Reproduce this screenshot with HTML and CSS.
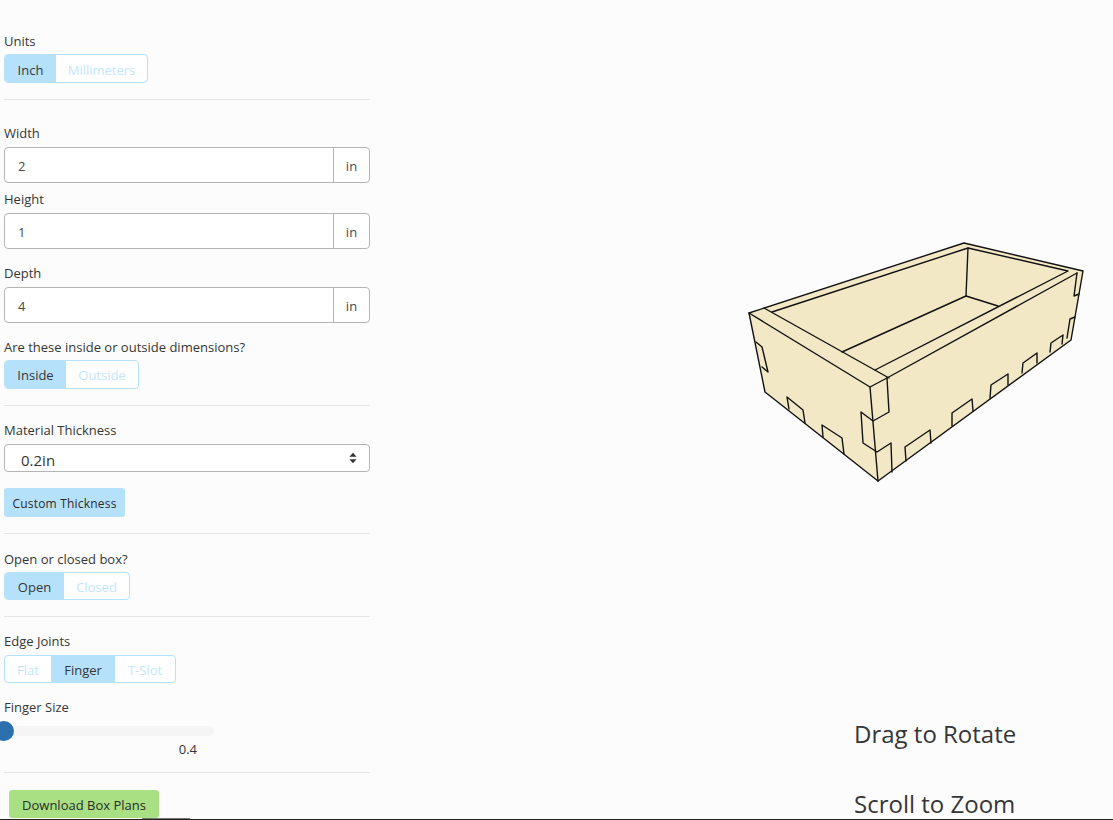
FILE: index.html
```html
<!DOCTYPE html>
<html lang="en">
<head>
<meta charset="utf-8">
<title>Box Plans</title>
<link rel="stylesheet" href="styles.css">
</head>
<body>
<div class="app">
  <aside class="panel">
    <section class="group group-units">
      <div class="label">Units</div>
      <div class="toggle">
        <span class="opt on w-inch">Inch</span><span class="opt w-mm">Millimeters</span>
      </div>
    </section>
    <hr class="rule rule-units">
    <div class="label label-first">Width</div>
    <div class="field"><span class="value">2</span><span class="unit">in</span></div>
    <div class="label label-tight">Height</div>
    <div class="field"><span class="value">1</span><span class="unit">in</span></div>
    <div class="label label-mid">Depth</div>
    <div class="field"><span class="value">4</span><span class="unit">in</span></div>
    <div class="label label-dim">Are these inside or outside dimensions?</div>
    <div class="toggle toggle-dim">
      <span class="opt on w-in">Inside</span><span class="opt w-out">Outside</span>
    </div>
    <hr class="rule rule-dim">
    <div class="label">Material Thickness</div>
    <div class="select"><span class="select-value">0.2in</span>
      <svg class="carets" width="8" height="12" viewBox="0 0 8 12"><path d="M4 .8 7.6 4.8H.4zM4 11.2.4 7.2h7.2z"/></svg>
    </div>
    <button class="custom">Custom Thickness</button>
    <hr class="rule rule-custom">
    <div class="label">Open or closed box?</div>
    <div class="toggle toggle-sm">
      <span class="opt on w-open">Open</span><span class="opt w-closed">Closed</span>
    </div>
    <hr class="rule rule-open">
    <div class="label label-edge">Edge Joints</div>
    <div class="toggle toggle-sm">
      <span class="opt w-flat">Flat</span><span class="opt on w-finger">Finger</span><span class="opt w-tslot">T-Slot</span>
    </div>
    <div class="label label-finger">Finger Size</div>
    <div class="slider"><span class="thumb"></span></div>
    <div class="slider-value">0.4</div>
    <hr class="rule rule-slider">
    <button class="download">Download Box Plans</button>
  </aside>
  <main class="stage">
    <svg class="box" width="345" height="245" viewBox="745 240 345 245">
      <path class="wood" d="M749 313 964 243 1083 271 1071 340 878 481 765 392Z"/>
      <g class="edges">
        <path d="M749 313 964 243 1083 271 1071 340 878 481 765 392 749 313"/>
        <path d="M764 308 889 378"/>
        <path d="M749 313 870 387 887 378"/>
        <path d="M772 312 968 248 1068 271 875 370"/>
        <path d="M1077 273 887 378"/>
        <path d="M968 248 966 296 842 352"/>
        <path d="M966 296 998 306"/>
        <path d="M1079 294 1074 296 1077 273"/>
        <path d="M870 387 878 481"/>
        <path d="M887 378 889 412 873 421 861 412 863 443 877 452 891 443 892 472"/>
        <path d="M787 397 789 409M787 397 803 410 805 423"/>
        <path d="M822 425 823 437M822 425 842 438 844 454"/>
        <path d="M756 342 762 347 768 372 762 367"/>
        <path d="M906 461 905 447 930 430 931 443"/>
        <path d="M952 426 952 413 972 399 973 411"/>
        <path d="M990 398 991 385 1008 374 1008 385"/>
        <path d="M1022 373 1023 363 1037 353 1037 363"/>
        <path d="M1050 352 1051 343 1063 335 1062 344"/>
        <path d="M1067 338 1070 319 1075 317"/>
      </g>
    </svg>
    <div class="hint hint-drag">Drag to Rotate</div>
    <div class="hint hint-scroll">Scroll to Zoom</div>
  </main>
  <span class="edge-mark"></span>
</div>
</body>
</html>
```
FILE: styles.css
```css
* { box-sizing: border-box; }
html, body { margin: 0; height: 100%; overflow: hidden; }
body {
  background: #fcfcfc;
  color: #363636;
  font-family: "Open Sans", "Noto Sans", sans-serif;
  font-size: 13px;
}
.app {
  position: relative;
  width: 1113px;
  height: 820px;
  overflow: hidden;
  border-bottom: 1px solid #222;
}
.edge-mark {
  position: absolute;
  left: 142px;
  bottom: 0;
  width: 48px;
  height: 1px;
  background: #777;
}
.panel {
  width: 366px;
  margin-left: 4px;
  padding-top: 32px;
  display: flex;
  flex-direction: column;
  align-items: flex-start;
}
.label { height: 22px; line-height: 18px; white-space: nowrap; color: #363636; }
.label-first { height: 16px; line-height: 16px; margin-bottom: 6px; }
.label-tight { margin-top: 6px; height: 24px; line-height: 20px; }
.label-mid { margin-top: 15px; height: 23px; }
.label-dim { margin-top: 15px; }
.label-edge { height: 23px; }
.label-finger { margin-top: 15px; height: 26px; }
.toggle {
  display: flex;
  height: 29px;
  border: 1px solid #b6e1fb;
  border-radius: 4px;
  overflow: hidden;
  background: #fff;
}
.toggle-sm { height: 28px; }
.opt {
  display: flex;
  align-items: center;
  justify-content: center;
  color: #bfe6fd;
  padding-top: 2px;
}
.toggle-dim .opt { padding-top: 0; }
.opt.on { background: #b6e1fb; color: #363636; }
.w-inch { width: 51px; }
.w-mm { width: 91px; }
.w-in { width: 61px; }
.w-out { width: 72px; }
.w-open { width: 59px; }
.w-closed { width: 65px; }
.w-flat { width: 46px; }
.w-finger { width: 64px; }
.w-tslot { width: 60px; }
.rule {
  width: 100%;
  height: 1px;
  border: 0;
  background: #e6e6e6;
  margin: 16px 0;
}
.rule-units { margin-bottom: 25px; }
.rule-dim { margin-bottom: 15px; }
.field {
  width: 100%;
  height: 36px;
  display: flex;
  border: 1px solid #b5b5b5;
  border-radius: 4px;
  background: #fff;
  font-size: 13px;
}
.value { flex: 1; padding: 0 13px; line-height: 36px; color: #4a4a4a; }
.unit { width: 36px; border-left: 1px solid #b5b5b5; text-align: center; line-height: 36px; color: #4a4a4a; }
.select {
  position: relative;
  width: 100%;
  height: 28px;
  margin-top: 1px;
  border: 1px solid #b5b5b5;
  border-radius: 4px;
  background: #fff;
  display: flex;
  align-items: center;
  justify-content: space-between;
  padding: 0 12px 0 16px;
  font-size: 15px;
  color: #363636;
}
.select-value { padding-top: 4px; }
.carets { fill: #363636; }
.custom, .download {
  font: inherit;
  border: 0;
  border-radius: 3px;
  color: #2b2b2b;
  padding: 2px 0 0;
}
.custom { width: 121px; height: 29px; margin-top: 16px; background: #b6e1fb; font-size: 12px; letter-spacing: .2px; }
.rule-custom { margin-top: 16px; margin-bottom: 16px; }
.rule-open { margin-bottom: 15px; }
.slider {
  position: relative;
  width: 210px;
  height: 10px;
  margin-top: 2px;
  border-radius: 5px;
  background: #f5f5f5;
}
.thumb {
  position: absolute;
  left: -10px;
  top: -5px;
  width: 20px;
  height: 20px;
  border-radius: 50%;
  background: #2d70ae;
}
.slider-value { width: 193px; text-align: right; margin-top: 4px; line-height: 18px; }
.rule-slider { margin-top: 14px; margin-bottom: 17px; }
.download { width: 150px; height: 28px; margin-left: 5px; background: #a8e083; }
.box { position: absolute; left: 745px; top: 240px; }
.wood { fill: #f3e8c6; }
.edges { fill: none; stroke: #111; stroke-width: 1.4; stroke-linejoin: round; stroke-linecap: round; }
.hint { position: absolute; left: 854px; font-size: 24px; line-height: 32px; color: #363636; white-space: nowrap; }
.hint-drag { top: 718px; }
.hint-scroll { top: 788px; }
```
